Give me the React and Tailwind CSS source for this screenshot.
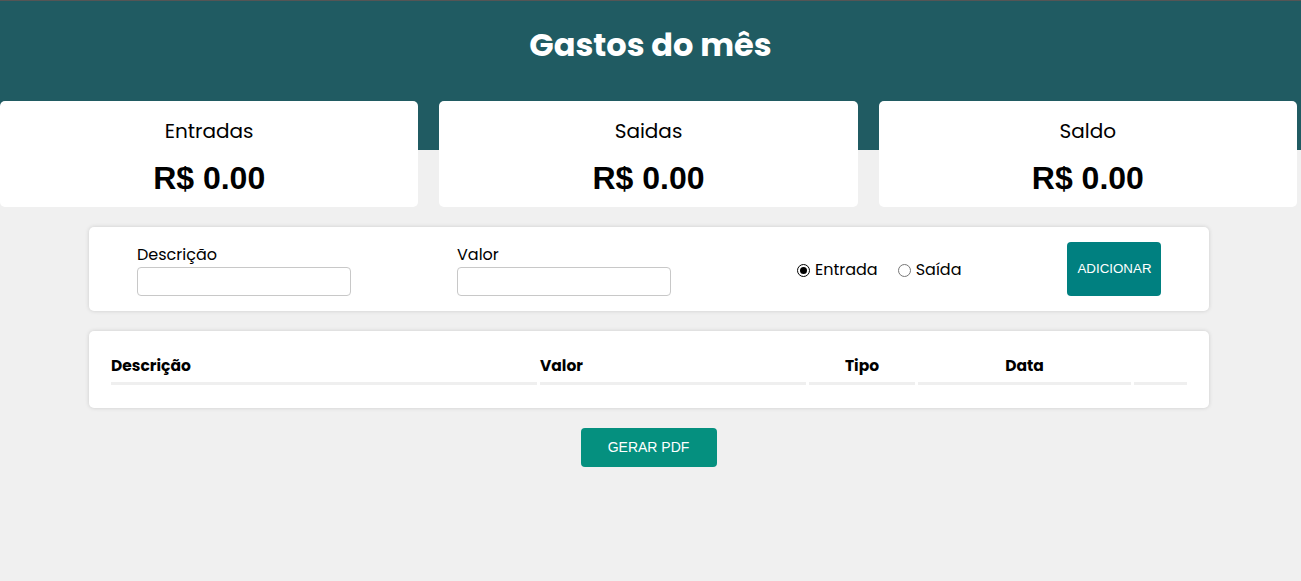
export default function App() {
  const font = { fontFamily: "Poppins, Inter, 'Noto Sans', sans-serif" };
  const btnFont = { fontFamily: "Arial, 'Liberation Sans', sans-serif" };
  const Card = ({ title }) => (
    <div className="bg-white rounded-[5px] h-[106px] flex flex-col items-center pt-[17px]">
      <div className="text-[20px] leading-[26px] text-black">{title}</div>
      <div className="text-[32px] leading-[40px] font-bold text-black mt-[14px]" style={btnFont}>R$ 0.00</div>
    </div>
  );
  return (
    <div className="min-h-[581px] bg-[#f0f0f0] border-t border-[#555]" style={font}>
      <div className="bg-[#205b62] h-[149px] flex justify-center">
        <h1 className="text-white text-[32px] font-bold leading-none mt-[28px]">Gastos do mês</h1>
      </div>
      <div className="grid grid-cols-3 gap-[21px] pr-[4px] -mt-[49px]">
        <Card title="Entradas" />
        <Card title="Saidas" />
        <Card title="Saldo" />
      </div>
      <div className="mx-[89px] w-[1120px] mt-[20px] bg-white rounded-[5px] shadow-[0_0_4px_rgba(0,0,0,0.15)] h-[84px] flex items-start">
        <div className="ml-[48px] mt-[16px] flex flex-col">
          <label className="text-[16px] leading-[23px] text-black">Descrição</label>
          <input className="mt-[1px] w-[214px] h-[29px] border border-[#c8c8c8] rounded-[4px] bg-white" />
        </div>
        <div className="ml-[106px] mt-[16px] flex flex-col">
          <label className="text-[16px] leading-[23px] text-black">Valor</label>
          <input className="mt-[1px] w-[214px] h-[29px] border border-[#c8c8c8] rounded-[4px] bg-white" />
        </div>
        <div className="ml-[126px] mt-[31px] flex items-center text-[16px] text-black">
          <span className="w-[13px] h-[13px] rounded-full border border-black flex items-center justify-center">
            <span className="w-[7px] h-[7px] rounded-full bg-black" />
          </span>
          <span className="ml-[5px]">Entrada</span>
          <span className="ml-[20px] w-[13px] h-[13px] rounded-full border border-[#777]" />
          <span className="ml-[5px]">Saída</span>
        </div>
        <button className="ml-[106px] mt-[15px] w-[94px] h-[54px] bg-[#008080] rounded-[4px] text-white text-[13.33px]" style={btnFont}>
          ADICIONAR
        </button>
      </div>
      <div className="mx-[89px] w-[1120px] mt-[20px] bg-white rounded-[5px] shadow-[0_0_4px_rgba(0,0,0,0.15)] h-[77px] pt-[22px] px-[19px]">
        <table className="border-separate border-spacing-x-[3px] border-spacing-y-0 w-[1082px]">
          <thead>
            <tr className="text-[15.5px] font-semibold text-black">
              <th className="w-[426px] text-left border-b-[3px] border-[#efefef] h-[32px] align-middle pb-[3px]">Descrição</th>
              <th className="w-[266px] text-left border-b-[3px] border-[#efefef] pb-[3px]">Valor</th>
              <th className="w-[106px] text-center border-b-[3px] border-[#efefef] pb-[3px]">Tipo</th>
              <th className="w-[213px] text-center border-b-[3px] border-[#efefef] pb-[3px]">Data</th>
              <th className="w-[53px] border-b-[3px] border-[#efefef]"></th>
            </tr>
          </thead>
        </table>
      </div>
      <div className="flex justify-center mt-[20px] pr-[4px]">
        <button className="w-[136px] h-[39px] bg-[#05907f] rounded-[4px] text-white text-[14px]" style={btnFont}>
          GERAR PDF
        </button>
      </div>
    </div>
  );
}
